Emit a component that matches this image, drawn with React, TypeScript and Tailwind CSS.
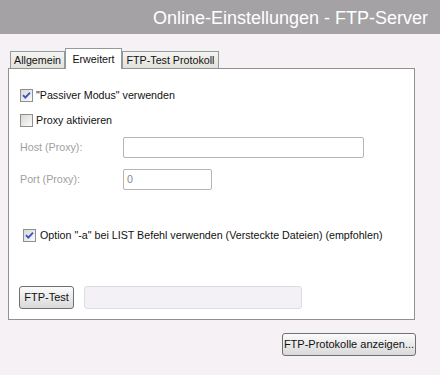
import React from "react";

const font = { fontFamily: '"Liberation Sans", Arial, sans-serif' };

function Check({ checked }: { checked: boolean }) {
  return (
    <div className="w-[13px] h-[13px] border border-[#8e8f8f] bg-gradient-to-br from-[#d8d8d4] to-[#fbfbfb] flex items-center justify-center shrink-0">
      {checked && (
        <svg width="9" height="9" viewBox="0 0 9 9">
          <path d="M1 4.2 L3.3 6.6 L8 1.6" stroke="#3a55c8" strokeWidth="1.9" fill="none" />
        </svg>
      )}
    </div>
  );
}

export default function App() {
  return (
    <div style={font} className="w-[440px] h-[375px] bg-[#f5f1f5] flex flex-col text-[10.7px] text-[#111] overflow-hidden whitespace-nowrap">
      <div className="h-[34px] bg-[#a4a2a5] flex items-center justify-end pr-[12px] shrink-0">
        <span className="text-[18px] text-white leading-none mt-[2px]">Online-Einstellungen - FTP-Server</span>
      </div>
      <div className="flex items-end pl-[10px] mt-[14px] h-[20px] relative z-10">
        <div className="h-[17px] w-[55px] border border-b-0 border-[#919b9c] bg-gradient-to-b from-[#f4f4f2] to-[#e3e1dc] flex items-center justify-center">Allgemein</div>
        <div className="h-[21px] w-[57px] border border-b-0 border-[#919b9c] bg-white flex items-start justify-center pt-[2px] -mb-[1px]">Erweitert</div>
        <div className="h-[17px] w-[97px] border border-b-0 border-[#919b9c] bg-gradient-to-b from-[#f4f4f2] to-[#e3e1dc] flex items-center justify-center">FTP-Test Protokoll</div>
      </div>
      <div className="ml-[8px] w-[407px] h-[252px] border border-[#919191] bg-white flex flex-col shrink-0">
        <div className="flex items-center gap-[3px] ml-[11px] mt-[20px] h-[13px]">
          <Check checked />
          <span>"Passiver Modus" verwenden</span>
        </div>
        <div className="flex items-center gap-[3px] ml-[11px] mt-[12px] h-[13px]">
          <Check checked={false} />
          <span>Proxy aktivieren</span>
        </div>
        <div className="flex items-center ml-[11px] mt-[10px] h-[21px]">
          <span className="w-[103px] text-[#a0a0a0]">Host (Proxy):</span>
          <div className="w-[241px] h-[21px] border border-[#b5b5b5] rounded-[2px] bg-white" />
        </div>
        <div className="flex items-center ml-[11px] mt-[11px] h-[21px]">
          <span className="w-[103px] text-[#a0a0a0]">Port (Proxy):</span>
          <div className="w-[89px] h-[21px] border border-[#b5b5b5] rounded-[2px] bg-white flex items-center pl-[3px] text-[#8a8a8a]">0</div>
        </div>
        <div className="flex items-center gap-[4px] ml-[14px] mt-[39px] h-[13px]">
          <Check checked />
          <span>Option "-a" bei LIST Befehl verwenden (Versteckte Dateien) (empfohlen)</span>
        </div>
        <div className="flex items-center ml-[10px] mt-[44px] h-[23px] gap-[10px]">
          <div className="w-[55px] h-[23px] border border-[#707070] rounded-[3px] bg-gradient-to-b from-[#fbfbfb] to-[#d9d9d9] flex items-center justify-center text-[11px]">FTP-Test</div>
          <div className="w-[218px] h-[23px] border border-[#d9dee6] rounded-[3px] bg-[#f3f1f5]" />
        </div>
      </div>
      <div className="flex justify-end pr-[24px] mt-[13px]">
        <div className="w-[134px] h-[23px] border border-[#707070] rounded-[3px] bg-gradient-to-b from-[#fbfbfb] to-[#d9d9d9] flex items-center justify-center text-[11px]">FTP-Protokolle anzeigen...</div>
      </div>
    </div>
  );
}
